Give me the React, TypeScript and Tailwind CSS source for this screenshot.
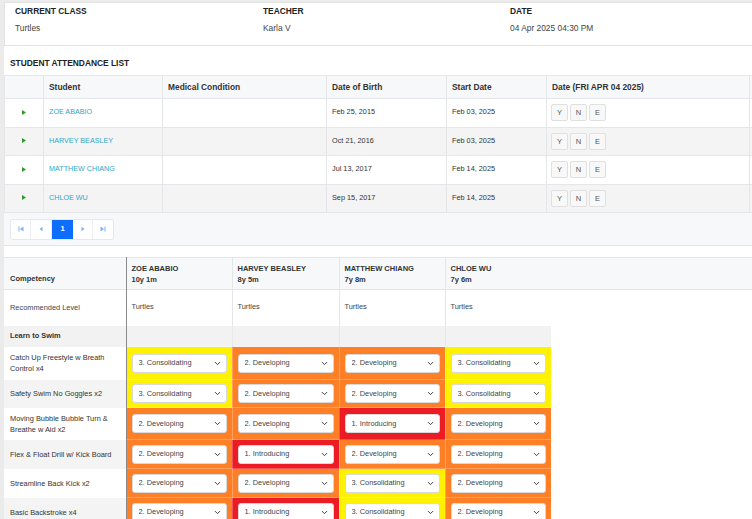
import { ChevronDown } from 'lucide-react';

type Level = 1 | 2 | 3;

const attendance = [
  { name: 'ZOE ABABIO', dob: 'Feb 25, 2015', start: 'Feb 03, 2025' },
  { name: 'HARVEY BEASLEY', dob: 'Oct 21, 2016', start: 'Feb 03, 2025' },
  { name: 'MATTHEW CHIANG', dob: 'Jul 13, 2017', start: 'Feb 14, 2025' },
  { name: 'CHLOE WU', dob: 'Sep 15, 2017', start: 'Feb 14, 2025' },
];

const students = [
  { name: 'ZOE ABABIO', age: '10y 1m' },
  { name: 'HARVEY BEASLEY', age: '8y 5m' },
  { name: 'MATTHEW CHIANG', age: '7y 8m' },
  { name: 'CHLOE WU', age: '7y 6m' },
];

const competencies: { label: string; levels: Level[]; h: string }[] = [
  { label: 'Catch Up Freestyle w Breath Control x4', levels: [3, 2, 2, 3], h: 'h-[33px]' },
  { label: 'Safety Swim No Goggles x2', levels: [3, 2, 2, 3], h: 'h-[28px]' },
  { label: 'Moving Bubble Bubble Turn & Breathe w Aid x2', levels: [2, 2, 1, 2], h: 'h-[32px]' },
  { label: 'Flex & Float Drill w/ Kick Board', levels: [2, 1, 2, 2], h: 'h-[29px]' },
  { label: 'Streamline Back Kick x2', levels: [2, 2, 3, 2], h: 'h-[29px]' },
  { label: 'Basic Backstroke x4', levels: [2, 1, 3, 2], h: 'h-[29px]' },
];

const levelText: Record<Level, string> = {
  1: '1. Introducing',
  2: '2. Developing',
  3: '3. Consolidating',
};

const levelBg: Record<Level, string> = {
  1: 'bg-[#ed1c24]',
  2: 'bg-[#ff7f27]',
  3: 'bg-[#fff200]',
};

function PagerIcon({ kind }: { kind: 'first' | 'prev' | 'next' | 'last' }) {
  return (
    <svg width="6" height="6" viewBox="0 0 6 6" className="fill-[#7fb0f0]">
      {kind === 'first' && (
        <>
          <rect x="0.5" y="0.5" width="1" height="5" />
          <polygon points="5.5,0.5 5.5,5.5 2,3" />
        </>
      )}
      {kind === 'prev' && <polygon points="4.5,0.8 4.5,5.2 1.5,3" />}
      {kind === 'next' && <polygon points="1.5,0.8 1.5,5.2 4.5,3" />}
      {kind === 'last' && (
        <>
          <polygon points="0.5,0.5 0.5,5.5 4,3" />
          <rect x="4.5" y="0.5" width="1" height="5" />
        </>
      )}
    </svg>
  );
}

function LevelSelect({ level }: { level: Level }) {
  return (
    <div className="relative">
      <select
        defaultValue={level}
        className="block h-[19px] w-full appearance-none rounded-[3px] border border-[#d9d9d9] bg-white pl-[6px] text-[7.4px] text-[#444] outline-none"
      >
        <option value={1}>{levelText[1]}</option>
        <option value={2}>{levelText[2]}</option>
        <option value={3}>{levelText[3]}</option>
      </select>
      <ChevronDown className="pointer-events-none absolute right-[5px] top-[5px] h-[9px] w-[9px] text-[#333]" strokeWidth={2.5} />
    </div>
  );
}

export default function App() {
  return (
    <div className="h-[519px] w-[752px] overflow-hidden bg-[#ebebeb] pl-[4px] pt-[2px] font-['Liberation_Sans',Arial,sans-serif] text-[#333]">
      <div className="h-full bg-white">
        {/* CLASS INFO */}
        <div className="grid h-[44px] grid-cols-[248px_247px_1fr] border border-r-0 border-[#e3e3e3] px-[10px] pt-[3px]">
          {[
            ['CURRENT CLASS', 'Turtles'],
            ['TEACHER', 'Karla V'],
            ['DATE', '04 Apr 2025 04:30 PM'],
          ].map(([label, value]) => (
            <div key={label} className="space-y-[6px]">
              <div className="text-[8.4px] font-bold leading-[11px] text-[#222]">{label}</div>
              <div className="text-[8.4px] leading-[11px] text-[#444]">{value}</div>
            </div>
          ))}
        </div>

        {/* ATTENDANCE */}
        <div className="mt-[11px] mb-[6px] pl-[6px] text-[8.4px] font-bold leading-[12px] text-[#222]">
          STUDENT ATTENDANCE LIST
        </div>
        <table className="w-[760px] table-fixed border-collapse text-left">
          <colgroup>
            <col className="w-[39px]" />
            <col className="w-[119px]" />
            <col className="w-[164px]" />
            <col className="w-[120px]" />
            <col className="w-[100px]" />
            <col className="w-[203px]" />
            <col />
          </colgroup>
          <thead>
            <tr className="h-[23px] bg-[#f7f8fa] text-[8.4px] font-bold text-[#333]">
              <th className="border border-[#e4e6e9]" />
              <th className="border border-[#e4e6e9] px-[5px] font-bold">Student</th>
              <th className="border border-[#e4e6e9] px-[5px] font-bold">Medical Condition</th>
              <th className="border border-[#e4e6e9] px-[5px] font-bold">Date of Birth</th>
              <th className="border border-[#e4e6e9] px-[5px] font-bold">Start Date</th>
              <th className="border border-[#e4e6e9] px-[5px] font-bold">Date (FRI APR 04 2025)</th>
              <th className="border border-[#e4e6e9]" />
            </tr>
          </thead>
          <tbody>
            {attendance.map((s, i) => (
              <tr key={s.name} className={`h-[28.5px] text-[7.3px] ${i % 2 ? 'bg-[#f4f4f4]' : 'bg-white'}`}>
                <td className="border border-[#e4e6e9] text-center">
                  <svg width="4" height="5" viewBox="0 0 4 5" className="inline-block fill-[#2e9a2e]">
                    <polygon points="0,0 4,2.5 0,5" />
                  </svg>
                </td>
                <td className="border border-[#e4e6e9] px-[5px] text-[7.2px] text-[#33a6c4]">{s.name}</td>
                <td className="border border-[#e4e6e9]" />
                <td className="border border-[#e4e6e9] px-[5px] text-[#333]">{s.dob}</td>
                <td className="border border-[#e4e6e9] px-[5px] text-[#333]">{s.start}</td>
                <td className="border border-[#e4e6e9] px-[4px]">
                  <div className="flex gap-[2px]">
                    {['Y', 'N', 'E'].map((k) => (
                      <span
                        key={k}
                        className="flex h-[17px] w-[17px] items-center justify-center rounded-[2px] border border-[#e0e0e0] bg-[#f8f8f8] text-[7.5px] text-[#555]"
                      >
                        {k}
                      </span>
                    ))}
                  </div>
                </td>
                <td className="border border-[#e4e6e9]" />
              </tr>
            ))}
          </tbody>
        </table>
        <div className="flex h-[33px] items-center border-b border-[#e4e6e9] bg-[#f7f8fa] pl-[6px]">
          <div className="flex h-[21px] overflow-hidden rounded-[3px] border border-[#e6e8eb] bg-white">
            <span className="flex w-[20px] items-center justify-center border-r border-[#eceef1]"><PagerIcon kind="first" /></span>
            <span className="flex w-[21px] items-center justify-center border-r border-[#eceef1]"><PagerIcon kind="prev" /></span>
            <span className="flex w-[21px] items-center justify-center bg-[#0d6efd] text-[7.5px] font-bold text-white">1</span>
            <span className="flex w-[20px] items-center justify-center border-r border-[#eceef1]"><PagerIcon kind="next" /></span>
            <span className="flex w-[20px] items-center justify-center"><PagerIcon kind="last" /></span>
          </div>
        </div>

        {/* COMPETENCIES */}
        <table className="mt-[11px] w-[760px] table-fixed border-collapse text-left text-[7.4px]">
          <colgroup>
            <col className="w-[122px]" />
            <col className="w-[106px]" />
            <col className="w-[107px]" />
            <col className="w-[106px]" />
            <col className="w-[106px]" />
            <col />
          </colgroup>
          <thead>
            <tr className="h-[32px] border-y border-[#e4e6e9] bg-[#f7f8fa] text-[7.5px] font-bold text-[#333]">
              <th className="border-r border-r-[#8a8a8a] px-[6px] pt-[10px] align-middle font-bold">Competency</th>
              {students.map((s, i) => (
                <th key={s.name} className={`px-[5px] align-middle font-bold leading-[11px] ${i < 3 ? 'border-r border-[#e4e6e9]' : ''}`}>
                  <div>{s.name}</div>
                  <div>{s.age}</div>
                </th>
              ))}
              <th />
            </tr>
          </thead>
          <tbody>
            <tr className="h-[36px] bg-white text-[#444]">
              <td className="border-r border-r-[#8a8a8a] px-[6px]">Recommended Level</td>
              {students.map((s, i) => (
                <td key={s.name} className={`px-[5px] align-top pt-[11px] ${i < 3 ? 'border-r border-[#e4e6e9]' : ''}`}>
                  Turtles
                </td>
              ))}
              <td />
            </tr>
            <tr className="h-[21px]">
              <td className="border-r border-r-[#8a8a8a] bg-[#f2f2f2] px-[6px] font-bold text-[#333]">Learn to Swim</td>
              {students.map((s, i) => (
                <td key={s.name} className={`bg-[#f2f2f2] ${i < 3 ? 'border-r border-[#e8e8e8]' : ''}`} />
              ))}
              <td className="bg-white" />
            </tr>
            {competencies.map((c, r) => (
              <tr key={c.label} className={c.h}>
                <td className={`border-r border-r-[#8a8a8a] px-[6px] leading-[11px] text-[#333] ${r % 2 ? 'bg-[#f4f4f4]' : 'bg-white'}`}>
                  {c.label}
                </td>
                {c.levels.map((lv, i) => (
                  <td key={i} className={`border border-white/25 px-[5px] ${levelBg[lv]}`}>
                    <LevelSelect level={lv} />
                  </td>
                ))}
                <td className="bg-white" />
              </tr>
            ))}
          </tbody>
        </table>
      </div>
    </div>
  );
}
